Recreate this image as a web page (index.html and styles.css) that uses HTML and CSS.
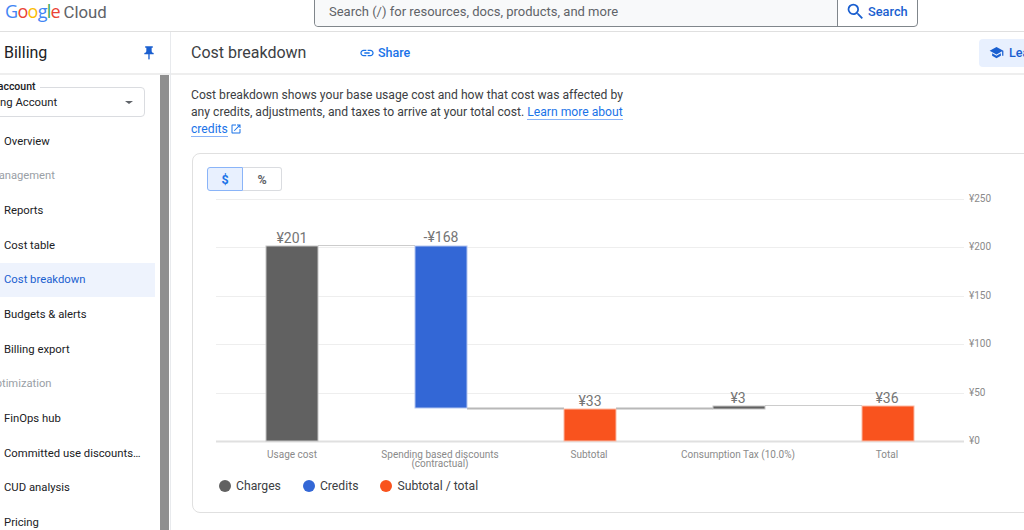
FILE: index.html
```html
<!DOCTYPE html>
<html lang="en">
<head>
    <meta charset="UTF-8">
    <meta name="viewport" content="width=device-width, initial-scale=1.0">
    <title>Cost breakdown</title>
    <link rel="stylesheet" href="styles.css">
</head>
<body>
    <!-- Top bar -->
    <header class="topbar">
        <div class="logo">
            <span class="logo-word"><span class="c-blue">G</span><span class="c-red">o</span><span class="c-yellow">o</span><span class="c-blue">g</span><span class="c-green">l</span><span class="c-red">e</span></span>
            <span class="logo-cloud">Cloud</span>
        </div>
        <div class="search">
            <div class="search-input">Search (/) for resources, docs, products, and more</div>
            <div class="search-button">
                <svg class="icon-search" viewBox="0 0 24 24"><path d="M15.5 14h-.79l-.28-.27A6.47 6.47 0 0 0 16 9.5 6.5 6.5 0 1 0 9.5 16c1.61 0 3.09-.59 4.23-1.57l.27.28v.79l5 4.99L20.49 19l-4.99-5zm-6 0C7.01 14 5 11.99 5 9.5S7.01 5 9.5 5 14 7.01 14 9.5 11.99 14 9.5 14z"/></svg>
                <span>Search</span>
            </div>
        </div>
    </header>

    <div class="layout">
        <!-- Sidebar -->
        <aside class="sidebar">
            <div class="side-head">
                <span class="side-title">Billing</span>
                <svg class="icon-pin" viewBox="0 0 24 24"><path d="M16 9V4h1c.55 0 1-.45 1-1s-.45-1-1-1H7c-.55 0-1 .45-1 1s.45 1 1 1h1v5c0 1.66-1.34 3-3 3v2h5.97v7l1 1 1-1v-7H19v-2c-1.66 0-3-1.34-3-3z"/></svg>
            </div>
            <div class="side-body">
                <div class="side-scroll">
                    <div class="account-select">
                        <span class="account-label">Billing account</span>
                        <span class="account-name">Billing Account</span>
                        <span class="account-arrow"></span>
                    </div>
                    <nav class="nav">
                        <a class="nav-item">Overview</a>
                        <div class="nav-group group-cost">Cost management</div>
                        <a class="nav-item">Reports</a>
                        <a class="nav-item">Cost table</a>
                        <a class="nav-item active">Cost breakdown</a>
                        <a class="nav-item">Budgets &amp; alerts</a>
                        <a class="nav-item">Billing export</a>
                        <div class="nav-group group-opt">Optimization</div>
                        <a class="nav-item">FinOps hub</a>
                        <a class="nav-item">Committed use discounts…</a>
                        <a class="nav-item">CUD analysis</a>
                        <a class="nav-item">Pricing</a>
                    </nav>
                </div>
                <div class="scrollbar"></div>
            </div>
        </aside>

        <!-- Main -->
        <main class="main">
            <div class="main-head">
                <h1 class="page-title">Cost breakdown</h1>
                <a class="share">
                    <svg class="icon-link" viewBox="0 0 24 24"><path d="M3.9 12c0-1.71 1.39-3.1 3.1-3.1h4V7H7c-2.76 0-5 2.24-5 5s2.24 5 5 5h4v-1.9H7c-1.71 0-3.1-1.39-3.1-3.1zM8 13h8v-2H8v2zm9-6h-4v1.9h4c1.71 0 3.1 1.39 3.1 3.1s-1.39 3.1-3.1 3.1h-4V17h4c2.76 0 5-2.24 5-5s-2.24-5-5-5z"/></svg>
                    Share
                </a>
                <a class="learn">
                    <svg class="icon-school" viewBox="0 0 24 24"><path d="M5 13.18v4L12 21l7-3.82v-4L12 17l-7-3.82zM12 3L1 9l11 6 9-4.91V17h2V9L12 3z"/></svg>
                    Learn
                </a>
            </div>
            <div class="content">
                <p class="intro">Cost breakdown shows your base usage cost and how that cost was affected by any credits, adjustments, and taxes to arrive at your total cost. <a class="intro-link">Learn more about credits</a><svg class="icon-open" viewBox="0 0 24 24"><path d="M19 19H5V5h7V3H5c-1.11 0-2 .9-2 2v14c0 1.1.89 2 2 2h14c1.1 0 2-.9 2-2v-7h-2v7zM14 3v2h3.59l-9.83 9.83 1.41 1.41L19 6.41V10h2V3h-7z"/></svg></p>

                <section class="card">
                    <div class="toggle">
                        <span class="toggle-btn selected">$</span>
                        <span class="toggle-btn">%</span>
                    </div>

                    <!-- viewBox uses page coordinates -->
                    <svg class="chart" viewBox="207 191 820 285">
                        <g class="grid">
                            <line x1="216" x2="964" y1="199.5" y2="199.5"/>
                            <line x1="216" x2="964" y1="247.5" y2="247.5"/>
                            <line x1="216" x2="964" y1="296.5" y2="296.5"/>
                            <line x1="216" x2="964" y1="344.5" y2="344.5"/>
                            <line x1="216" x2="964" y1="393.5" y2="393.5"/>
                            <line class="base" x1="216" x2="964" y1="441.5" y2="441.5"/>
                        </g>
                        <g class="axis">
                            <text x="969" y="202">¥250</text>
                            <text x="969" y="250">¥200</text>
                            <text x="969" y="299">¥150</text>
                            <text x="969" y="347">¥100</text>
                            <text x="969" y="396">¥50</text>
                            <text x="969" y="444">¥0</text>
                        </g>
                        <g class="connectors">
                            <line class="light" x1="318" x2="415" y1="245.5" y2="245.5"/>
                            <line x1="467" x2="564" y1="408.5" y2="408.5"/>
                            <line x1="616" x2="713" y1="408.5" y2="408.5"/>
                            <line class="light" x1="765" x2="862" y1="405.5" y2="405.5"/>
                        </g>
                        <g class="bars">
                            <rect class="charge" x="266" y="246" width="52" height="195"/>
                            <rect class="credit" x="415" y="246" width="52" height="162"/>
                            <rect class="subtotal" x="564" y="409" width="52" height="32"/>
                            <rect class="charge" x="713" y="406" width="52" height="3"/>
                            <rect class="subtotal" x="862" y="406" width="52" height="35"/>
                        </g>
                        <g class="values">
                            <text x="292" y="243">¥201</text>
                            <text x="441" y="242">-¥168</text>
                            <text x="590" y="406">¥33</text>
                            <text x="738" y="403">¥3</text>
                            <text x="887" y="403">¥36</text>
                        </g>
                        <g class="labels">
                            <text x="292" y="458">Usage cost</text>
                            <text x="440" y="458">Spending based discounts</text>
                            <text x="440" y="467">(contractual)</text>
                            <text x="589" y="458">Subtotal</text>
                            <text x="738" y="458">Consumption Tax (10.0%)</text>
                            <text x="887" y="458">Total</text>
                        </g>
                    </svg>

                    <div class="legend">
                        <div class="legend-item"><span class="dot dot-charge"></span>Charges</div>
                        <div class="legend-item"><span class="dot dot-credit"></span>Credits</div>
                        <div class="legend-item"><span class="dot dot-subtotal"></span>Subtotal / total</div>
                    </div>
                </section>
            </div>
        </main>
    </div>
</body>
</html>
```

FILE: styles.css
```css
html, body {
    margin: 0;
    padding: 0;
    height: 100%;
    overflow: hidden;
}
body {
    font-family: Roboto, "Liberation Sans", sans-serif;
    font-size: 12px;
    color: #3c4043;
    background: #fff;
}
a {
    color: #1a73e8;
    text-decoration: none;
}

/* top bar */
.topbar {
    display: flex;
    align-items: flex-end;
    height: 31px;
    border-bottom: 1px solid #e0e0e0;
    box-sizing: content-box;
}
.logo {
    width: 309px;
    padding-left: 5px;
    align-self: center;
    font-size: 18px;
    line-height: 22px;
    margin-top: -8px;
    white-space: nowrap;
}
.logo-word {
    font-family: "Open Sans", sans-serif;
    letter-spacing: -0.7px;
}
.logo-cloud {
    color: #5f6368;
    font-size: 16.8px;
    margin-left: -1px;
}
.c-blue { color: #4285f4; }
.c-red { color: #ea4335; }
.c-yellow { color: #fbbc05; }
.c-green { color: #34a853; }

.search {
    display: flex;
    width: 604px;
    height: 36px;
    margin-bottom: 4px;
    box-sizing: border-box;
    border: 1px solid #80868b;
    border-radius: 4px;
}
.search-input {
    flex: 1;
    display: flex;
    align-items: flex-end;
    padding: 0 0 7px 14px;
    background: #f8f9fa;
    color: #5f6368;
    font-size: 13px;
    border-radius: 4px 0 0 4px;
}
.search-button {
    display: flex;
    align-items: flex-end;
    gap: 2px;
    width: 80px;
    padding: 0 0 7px 7px;
    box-sizing: border-box;
    border-left: 1px solid #80868b;
    color: #1a5fd0;
    font-size: 12.8px;
    font-weight: 500;
}
.icon-search {
    width: 21px;
    height: 21px;
    fill: #1a5fd0;
    margin-bottom: -3px;
}

/* page layout */
.layout {
    display: flex;
    height: 498px;
}
.sidebar {
    width: 170px;
    flex-shrink: 0;
    display: flex;
    flex-direction: column;
    border-right: 1px solid #e8eaed;
}
.side-head {
    display: flex;
    align-items: center;
    justify-content: space-between;
    height: 41px;
    padding: 0 13px 0 4px;
    border-bottom: 2px solid #eeeeee;
    flex-shrink: 0;
}
.side-title {
    font-size: 16px;
    color: #202124;
}
.icon-pin {
    width: 16px;
    height: 16px;
    fill: #1a5fd0;
}
.side-body {
    display: flex;
    flex: 1;
    min-height: 0;
}
.side-scroll {
    width: 160px;
    overflow: hidden;
}
.scrollbar {
    width: 9px;
    background: #8f8f8f;
}
.account-select {
    position: relative;
    width: 155px;
    height: 30px;
    margin: 12px 0 0 -10px;
    display: flex;
    align-items: center;
    border: 1px solid #dadce0;
    border-radius: 4px;
    box-sizing: border-box;
    color: #202124;
    font-size: 12px;
}
.account-label {
    position: absolute;
    top: -7px;
    left: -25px;
    padding: 0 4px 0 0;
    background: #fff;
    font-size: 10.5px;
    line-height: 12px;
    font-weight: 500;
    white-space: nowrap;
    color: #202124;
}
.account-name {
    margin-left: -9px;
    font-size: 11.3px;
    white-space: nowrap;
}
.account-arrow {
    position: absolute;
    right: 11px;
    top: 13px;
    border: 4px solid transparent;
    border-top: 3px solid #5f6368;
    border-bottom: 0;
}
.nav {
    display: flex;
    flex-direction: column;
    margin-top: 7px;
}
.nav-item, .nav-group {
    display: flex;
    align-items: center;
    height: 34.65px;
    flex-shrink: 0;
    white-space: nowrap;
}
.nav-item {
    width: 155px;
    padding-left: 4px;
    box-sizing: border-box;
    color: #202124;
    font-size: 11.3px;
}
.nav-item.active {
    background: #eef3fd;
    color: #1a5fd0;
}
.nav-group {
    color: #9aa0a6;
    font-size: 11.2px;
}
.group-cost { margin-left: -37px; }
.group-opt { margin-left: -12px; }

/* main */
.main {
    flex: 1;
    min-width: 0;
    overflow: hidden;
}
.main-head {
    display: flex;
    align-items: center;
    height: 41px;
    padding-left: 20px;
    border-bottom: 2px solid #eeeeee;
}
.page-title {
    margin: 0;
    width: 169px;
    font-size: 16px;
    font-weight: 400;
    color: #3c4043;
}
.share {
    display: flex;
    align-items: center;
    gap: 3px;
    font-size: 12.5px;
    font-weight: 500;
    color: #1a73e8;
}
.icon-link {
    width: 16px;
    height: 16px;
    margin-left: -1px;
    fill: #1a73e8;
}
.learn {
    display: flex;
    align-items: center;
    gap: 5px;
    width: 60px;
    height: 28px;
    margin-left: auto;
    margin-right: -15px;
    padding-left: 10px;
    box-sizing: border-box;
    flex-shrink: 0;
    background: #e8f0fe;
    border-radius: 4px;
    color: #1a5fd0;
    font-size: 12.5px;
    font-weight: 500;
}
.icon-school {
    width: 15px;
    height: 15px;
    fill: #1a5fd0;
    flex-shrink: 0;
}
.content {
    padding: 12px 0 0 20px;
}
.intro {
    width: 436px;
    margin: 0 0 15px;
    font-size: 12.15px;
    line-height: 17px;
    color: #3c4043;
}
.intro-link {
    color: #1a73e8;
    border-bottom: 1px solid #8ab4f8;
}
.icon-open {
    width: 12px;
    height: 12px;
    fill: #1a73e8;
    margin-left: 2px;
    vertical-align: -2px;
}
.card {
    width: 900px;
    height: 360px;
    margin-left: 1px;
    padding: 13px 14px 0;
    box-sizing: border-box;
    border: 1px solid #e0e0e0;
    border-radius: 8px;
}
.toggle {
    display: flex;
    width: 75px;
    height: 24px;
}
.toggle-btn {
    flex: 1;
    display: flex;
    align-items: center;
    justify-content: center;
    box-sizing: border-box;
    border: 1px solid #dadce0;
    border-left: 0;
    border-radius: 0 3px 3px 0;
    font-size: 12.5px;
    font-weight: 700;
    color: #5f6368;
}
.toggle-btn.selected {
    flex: 0 0 36px;
    border: 1px solid #8ab4f8;
    border-radius: 3px 0 0 3px;
    background: #e8f0fe;
    color: #1a73e8;
}

/* chart */
.chart {
    display: block;
    width: 820px;
    height: 285px;
    font-family: Roboto, sans-serif;
}
.grid line {
    stroke: #eeeeee;
    stroke-width: 1;
}
.grid line.base {
    stroke: #e0e0e0;
    stroke-width: 2;
}
.axis text {
    fill: #8a8a8a;
    font-size: 10px;
}
.connectors line {
    stroke: #b8b8b8;
    stroke-width: 2;
}
.connectors line.light {
    stroke: #cccccc;
    stroke-width: 1;
}
.bars rect {
    stroke-width: 1;
}
.bars .charge { fill: #616161; stroke: #c4c4c4; }
.bars .credit { fill: #3367d6; stroke: #b4c6ef; }
.bars .subtotal { fill: #f9531e; stroke: #fbb9a3; }
.values text {
    fill: #757575;
    font-size: 14px;
    text-anchor: middle;
}
.labels text {
    fill: #8a8a8a;
    font-size: 10px;
    text-anchor: middle;
}
.legend {
    display: flex;
    gap: 22px;
    padding-left: 12px;
    height: 20px;
    align-items: center;
}
.legend-item {
    display: flex;
    align-items: center;
    gap: 5px;
    font-size: 12.2px;
    color: #3c4043;
}
.dot {
    width: 12px;
    height: 12px;
    border-radius: 50%;
}
.dot-charge { background: #616161; }
.dot-credit { background: #3367d6; }
.dot-subtotal { background: #f9531e; }
```
